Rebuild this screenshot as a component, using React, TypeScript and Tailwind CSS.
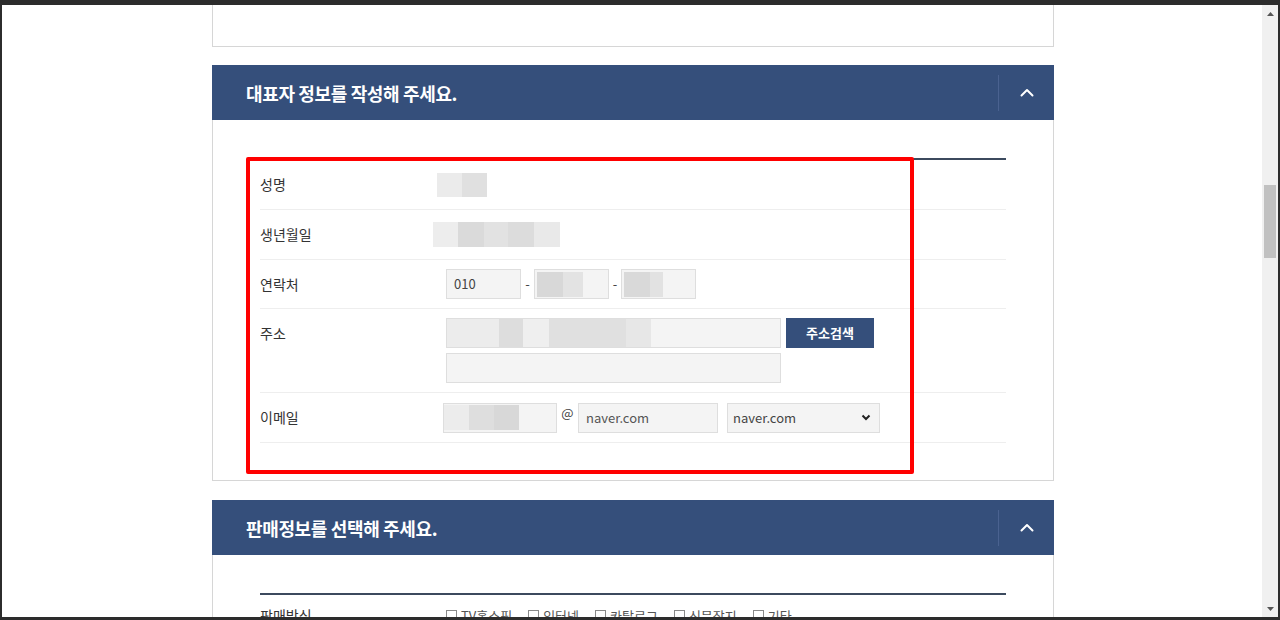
import React from "react";

/* ── mosaic blocks standing in for blurred personal data ── */
type Tile = { cls: string };

const Mosaic = ({ tiles, className }: { tiles: Tile[]; className: string }) => (
  <div className={`flex ${className}`}>
    {tiles.map((t, i) => (
      <div key={i} className={`h-full ${t.cls}`} />
    ))}
  </div>
);

const ChevronUp = () => (
  <svg width="14" height="9" viewBox="0 0 14 9">
    <polyline
      points="1.5,7.5 7,2 12.5,7.5"
      fill="none"
      stroke="#ffffff"
      strokeWidth="2"
      strokeLinecap="round"
      strokeLinejoin="round"
    />
  </svg>
);

const SectionHeader = ({ title }: { title: string }) => (
  <div className="flex h-[55px] items-center bg-[#354f7b]">
    <h2 className="flex-1 pl-[34px] text-[18px] leading-none font-bold tracking-[-0.02em] text-white">
      {title}
    </h2>
    <div className="h-[36px] w-px bg-[#4a6290]" />
    <div className="flex w-[55px] items-center justify-center">
      <ChevronUp />
    </div>
  </div>
);

const Row = ({
  label,
  className,
  labelClass = "",
  children,
}: {
  label: string;
  className: string;
  labelClass?: string;
  children?: React.ReactNode;
}) => (
  <div className={`flex border-b border-[#eeeeee] ${className}`}>
    <div className={`w-[186px] shrink-0 text-[14px] text-[#333] ${labelClass}`}>
      {label}
    </div>
    <div className="flex flex-1 items-center">{children}</div>
  </div>
);

const Field = ({
  className,
  children,
}: {
  className: string;
  children?: React.ReactNode;
}) => (
  <div
    className={`flex h-[30px] items-center border border-[#dedede] bg-[#f4f4f4] text-[13px] text-[#444] ${className}`}
  >
    {children}
  </div>
);

const Dash = ({ className }: { className: string }) => (
  <span className={`text-center text-[13px] text-[#444] ${className}`}>-</span>
);

const Check = ({ label }: { label: string }) => (
  <label className="flex items-center gap-[4px] text-[13px] text-[#555]">
    <span className="h-[11px] w-[11px] border border-[#8a8a8a] bg-white" />
    {label}
  </label>
);

export default function App() {
  return (
    <div className="flex h-[620px] w-[1280px] overflow-hidden border-t-[5px] border-r-2 border-b-[3px] border-l-2 border-[#2c2c2c] bg-white font-['Noto_Sans_CJK_KR','Noto_Sans',sans-serif]">
      {/* page */}
      <div className="flex-1">
        <div className="ml-[210px] w-[842px]">
          {/* previous card (tail) */}
          <div className="h-[42px] border-x border-b border-[#d6d6d6]" />

          {/* representative info */}
          <div className="mt-[18px]">
            <SectionHeader title="대표자 정보를 작성해 주세요." />
            <div className="relative border-x border-b border-[#d6d6d6] px-[47px] pt-[38px] pb-[37px]">
              <div className="border-t-2 border-[#3c4a5e]">
                <Row label="성명" className="h-[50px] items-center">
                  <Mosaic
                    className="-ml-[9px] h-[24px]"
                    tiles={[
                      { cls: "w-[25px] bg-[#ebebeb]" },
                      { cls: "w-[25px] bg-[#e0e0e0]" },
                    ]}
                  />
                </Row>
                <Row label="생년월일" className="h-[50px] items-center">
                  <Mosaic
                    className="-ml-[13px] h-[25px]"
                    tiles={[
                      { cls: "w-[25px] bg-[#ededed]" },
                      { cls: "w-[26px] bg-[#dadada]" },
                      { cls: "w-[24px] bg-[#e2e2e2]" },
                      { cls: "w-[26px] bg-[#dcdcdc]" },
                      { cls: "w-[26px] bg-[#e9e9e9]" },
                    ]}
                  />
                </Row>
                <Row label="연락처" className="h-[49px] items-center">
                  <Field className="w-[75px] px-[7px]">010</Field>
                  <Dash className="w-[13px]" />
                  <Field className="w-[75px] px-[2px]">
                    <Mosaic
                      className="h-[25px]"
                      tiles={[
                        { cls: "w-[26px] bg-[#d8d8d8]" },
                        { cls: "w-[20px] bg-[#e3e3e3]" },
                      ]}
                    />
                  </Field>
                  <Dash className="w-[12px]" />
                  <Field className="w-[75px] px-[2px]">
                    <Mosaic
                      className="h-[25px]"
                      tiles={[
                        { cls: "w-[26px] bg-[#d9d9d9]" },
                        { cls: "w-[13px] bg-[#e2e2e2]" },
                      ]}
                    />
                  </Field>
                </Row>
                <Row label="주소" className="h-[84px] items-start pt-[9px]" labelClass="flex h-[30px] items-center">
                  <div className="flex flex-col gap-[5px]">
                    <div className="flex gap-[5px]">
                      <Field className="w-[335px]">
                        <Mosaic
                          className="h-full"
                          tiles={[
                            { cls: "w-[52px] bg-[#ececec]" },
                            { cls: "w-[24px] bg-[#dddddd]" },
                            { cls: "w-[26px] bg-[#efefef]" },
                            { cls: "w-[77px] bg-[#e0e0e0]" },
                            { cls: "w-[25px] bg-[#e7e7e7]" },
                          ]}
                        />
                      </Field>
                      <button className="h-[30px] w-[88px] bg-[#354f7b] text-[13px] font-bold text-white">
                        주소검색
                      </button>
                    </div>
                    <Field className="w-[335px]" />
                  </div>
                </Row>
                <Row label="이메일" className="h-[50px] items-center">
                  <Field className="-ml-[3px] w-[114px]">
                    <Mosaic
                      className="h-[25px]"
                      tiles={[
                        { cls: "w-[25px] bg-[#ececec]" },
                        { cls: "w-[25px] bg-[#dedede]" },
                        { cls: "w-[25px] bg-[#d8d8d8]" },
                      ]}
                    />
                  </Field>
                  <span className="w-[21px] pb-[9px] text-center text-[13px] text-[#444]">@</span>
                  <Field className="w-[140px] px-[7px] text-[#555]">naver.com</Field>
                  <Field className="ml-[9px] w-[153px] justify-between pr-[8px] pl-[5px] text-[#333]">
                    <span>naver.com</span>
                    <svg width="10" height="7" viewBox="0 0 10 7">
                      <polyline
                        points="1.5,1.5 5,5 8.5,1.5"
                        fill="none"
                        stroke="#222"
                        strokeWidth="2"
                      />
                    </svg>
                  </Field>
                </Row>
              </div>

              {/* annotation box */}
              <div className="pointer-events-none absolute top-[37px] left-[33px] h-[317px] w-[668px] rounded-[2px] border-4 border-[#ff0000]" />
            </div>
          </div>

          {/* sales info */}
          <div className="mt-[19px]">
            <SectionHeader title="판매정보를 선택해 주세요." />
            <div className="border-x border-[#d6d6d6] px-[47px] pt-[38px]">
              <div className="border-t-2 border-[#3c4a5e]">
                <Row label="판매방식" className="h-[42px] items-center">
                  <div className="flex gap-[16px]">
                    <Check label="TV홈쇼핑" />
                    <Check label="인터넷" />
                    <Check label="카탈로그" />
                    <Check label="신문잡지" />
                    <Check label="기타" />
                  </div>
                </Row>
              </div>
            </div>
          </div>
        </div>
      </div>

      {/* scrollbar */}
      <div className="flex w-[16px] flex-col items-center bg-[#f0f0f0]">
        <div className="flex h-[17px] items-center justify-center">
          <svg width="7" height="4" viewBox="0 0 7 4">
            <polygon points="3.5,0 7,4 0,4" fill="#555" />
          </svg>
        </div>
        <div className="mt-[163px] h-[73px] w-[12px] bg-[#c1c1c1]" />
        <div className="flex-1" />
        <div className="flex h-[17px] items-center justify-center">
          <svg width="7" height="4" viewBox="0 0 7 4">
            <polygon points="0,0 7,0 3.5,4" fill="#555" />
          </svg>
        </div>
      </div>
    </div>
  );
}
